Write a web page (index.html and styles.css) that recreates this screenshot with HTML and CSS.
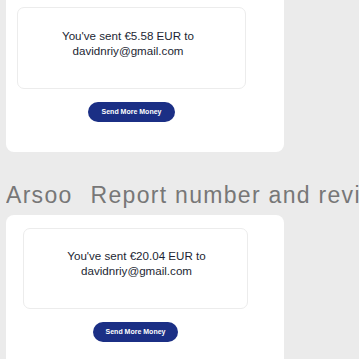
FILE: index.html
```html
<!DOCTYPE html>
<html>
<head>
    <meta charset="utf-8" />
    <title>Transfers</title>
    <link rel="stylesheet" href="styles.css">
</head>
<body>
    <div class="card first">
        <div class="sent sent-a">
            <p>You've sent €5.58 EUR to<br />davidnriy@gmail.com</p>
        </div>
        <a class="boton boton-a" href="#">Send More Money</a>
    </div>

    <h2 class="titulo"><span class="marca">Arsoo</span>Report number and review</h2>

    <div class="card">
        <div class="sent sent-b">
            <p>You've sent €20.04 EUR to<br />davidnriy@gmail.com</p>
        </div>
        <a class="boton boton-b" href="#">Send More Money</a>
    </div>
</body>
</html>
```

FILE: styles.css
```css
body {
    margin: 0;
    padding: 0 6px;
    background: #ebebeb;
    font-family: "Liberation Sans", Arial, sans-serif;
    overflow: hidden;
}

div.card {
    width: 278px;
    background: #fff;
    border-radius: 8px;
    padding: 13px 0 30px 0;
}

div.first {
    margin-top: -12px;
    padding-top: 19px;
}

div.sent {
    border: 1px solid #ececec;
    border-radius: 7px;
    box-sizing: border-box;
    text-align: center;
    color: #1c1f33;
    font-size: 11.6px;
    line-height: 15px;
}

div.sent p {
    margin: 0;
}

div.sent-a {
    margin-left: 11px;
    width: 229px;
    height: 82px;
    padding: 20px 7px 0 0;
}

div.sent-b {
    margin-left: 17px;
    width: 225px;
    height: 81px;
    padding: 19px 0 0 2px;
}

a.boton {
    display: block;
    height: 20px;
    line-height: 20px;
    border-radius: 10px;
    background: #1b2f85;
    color: #fff;
    font-size: 7px;
    font-weight: bold;
    text-align: center;
    text-decoration: none;
    margin-top: 13px;
}

a.boton-a {
    margin-left: 82px;
    width: 87px;
}

a.boton-b {
    margin-left: 87px;
    width: 85px;
}

h2.titulo {
    margin: 0 -6px 0 0;
    height: 63px;
    line-height: 86px;
    font-size: 23px;
    font-weight: normal;
    color: #777;
    white-space: nowrap;
    overflow: hidden;
    letter-spacing: 1.3px;
}

span.marca {
    margin-right: 18px;
}
```
